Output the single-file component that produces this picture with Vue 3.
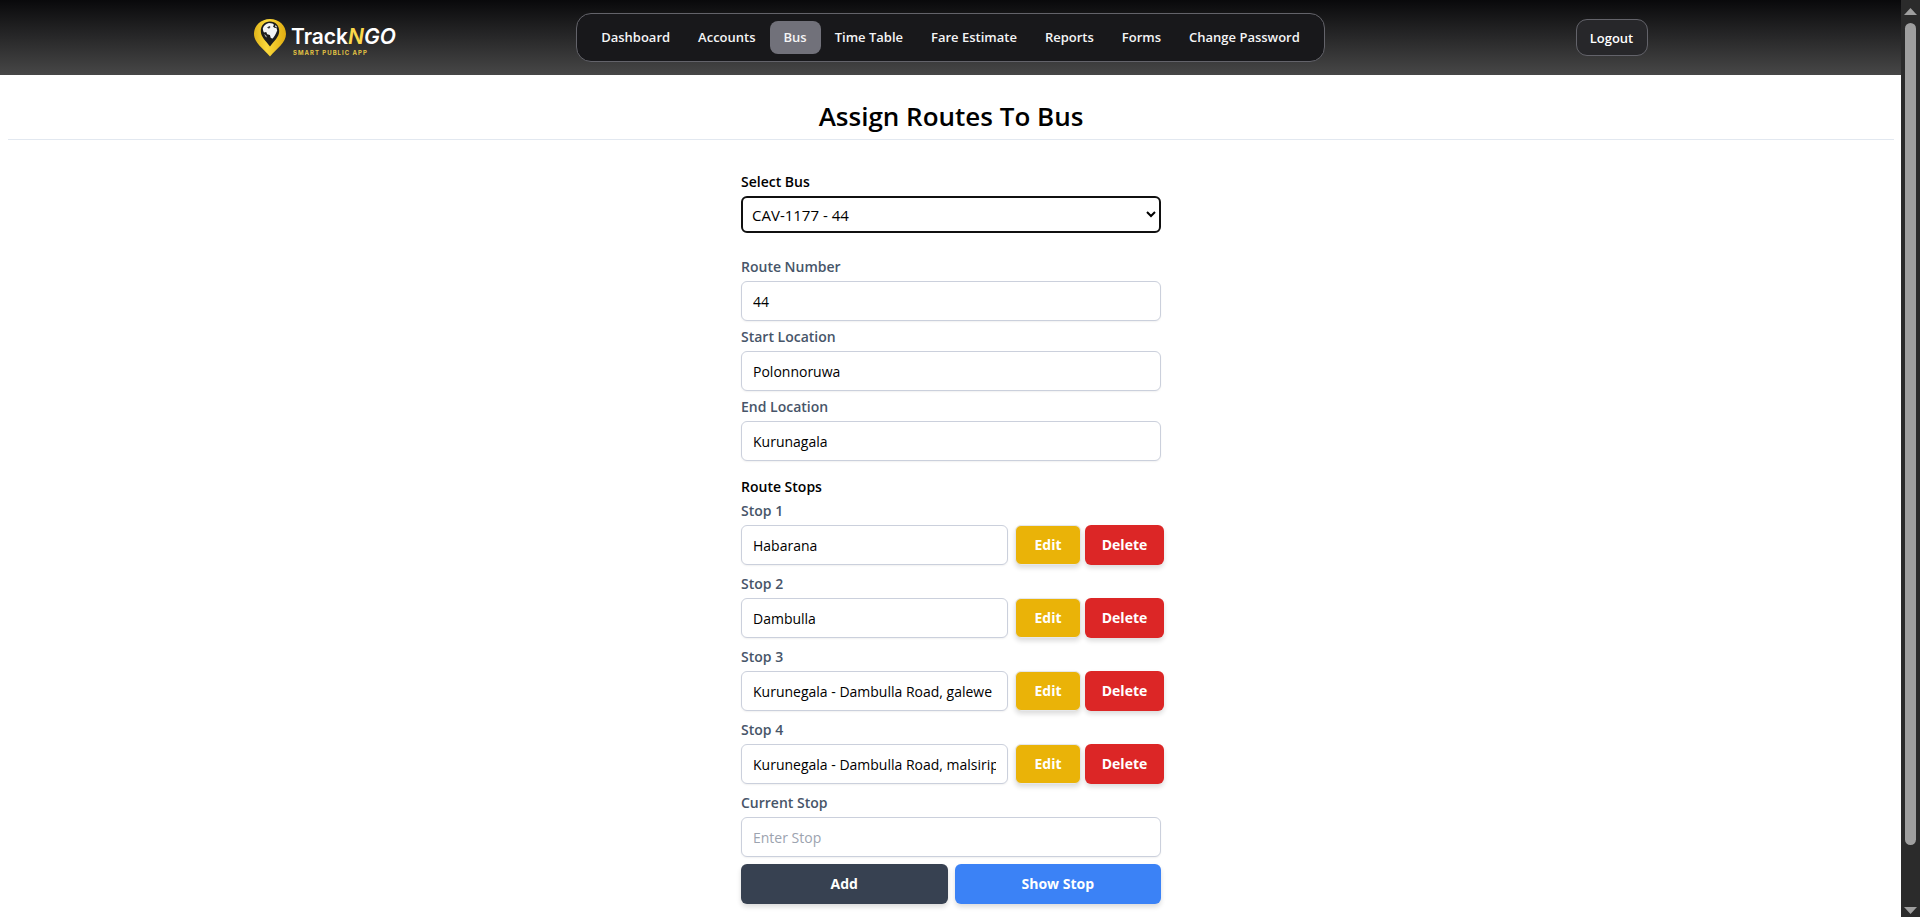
<script setup>
import { ref } from 'vue'

const navItems = ['Dashboard', 'Accounts', 'Bus', 'Time Table', 'Fare Estimate', 'Reports', 'Forms', 'Change Password']
const active = ref('Bus')
const bus = ref('CAV-1177 - 44')
const fields = ref([
  { id: 'route-number', label: 'Route Number', value: '44' },
  { id: 'start-location', label: 'Start Location', value: 'Polonnoruwa' },
  { id: 'end-location', label: 'End Location', value: 'Kurunagala' },
])
const stops = ref(['Habarana', 'Dambulla', 'Kurunegala - Dambulla Road, galewe', 'Kurunegala - Dambulla Road, malsirip'])
const currentStop = ref('')
</script>

<template>
  <div class="window">
    <div class="page">
      <header class="header">
        <div class="bar">
          <a href="#" class="logo" aria-label="TrackNGO">
            <svg width="144" height="42" viewBox="0 0 144 42">
              <defs>
                <linearGradient id="pin" x1="0" y1="0" x2="1" y2="0">
                  <stop offset="0" stop-color="#e0b41a" />
                  <stop offset="0.4" stop-color="#fbd93c" />
                  <stop offset="1" stop-color="#e0ac10" />
                </linearGradient>
              </defs>
              <path d="M16 2C7 2 0 8.600 0 17c0 8.500 9 14.500 16 22.500C23 31.500 32 25.500 32 17 32 8.600 25 2 16 2z" fill="url(#pin)" />
              <path d="M16 4.500C10.500 4.500 6.800 8.500 6.800 14c0 6 5.200 10 9.200 15.500 4-5.500 9.200-9.500 9.200-15.500C25.200 8.500 21.500 4.500 16 4.500z" fill="#1c1c1d" />
              <path d="M8.800 11.500c.8-2.800 3-5 6.200-5.500l3.500.4 1.500 1.400-1 1.600 1.500 1.300 2 .3.700 2.500-1.300 3-1.200 2.300-2 2.700-1.900-.4-.9-3.100-2.700-.8-1-2.200-2.200.6-.8-1.700z" fill="#f4f4f4" />
              <path d="M13 10.500l2.500-1.500 1 1-1.500 1.700z" fill="#3a3a3b" />
              <path d="M21.500 8l1.700 2-.8.600-1.500-1.200z" fill="#dddddd" />
              <path d="M10 17l2 1.200 1.200 2.300-1.700-.8z" fill="#a8a8a8" />
              <text x="37" y="27" class="brand">Track<tspan class="italic yellow">N</tspan><tspan class="italic">GO</tspan></text>
              <text x="39" y="38" class="tagline">SMART PUBLIC APP</text>
            </svg>
          </a>
          <nav class="nav">
            <a v-for="item in navItems" :key="item" href="#" class="nav-item" :class="{ active: item === active }" @click.prevent="active = item">{{ item }}</a>
          </nav>
          <button type="button" class="logout">Logout</button>
        </div>
      </header>

      <main class="content">
        <h1 class="title">Assign Routes To Bus</h1>
        <form class="form" @submit.prevent>
          <label class="label strong" for="bus">Select Bus</label>
          <select id="bus" v-model="bus" class="select">
            <option>CAV-1177 - 44</option>
          </select>

          <div class="group">
            <template v-for="field in fields" :key="field.id">
              <label class="label" :for="field.id">{{ field.label }}</label>
              <input :id="field.id" v-model="field.value" class="input" type="text" />
            </template>
          </div>

          <h2 class="stops-title">Route Stops</h2>
          <div v-for="(stop, i) in stops" :key="i" class="stop">
            <label class="label compact" :for="'stop-' + i">Stop {{ i + 1 }}</label>
            <div class="stop-row">
              <input :id="'stop-' + i" v-model="stops[i]" class="input" type="text" />
              <button type="button" class="btn edit">Edit</button>
              <button type="button" class="btn delete">Delete</button>
            </div>
          </div>

          <label class="label compact" for="current">Current Stop</label>
          <input id="current" v-model="currentStop" class="input" type="text" placeholder="Enter Stop" />
          <div class="actions">
            <button type="button" class="btn add">Add</button>
            <button type="button" class="btn show">Show Stop</button>
          </div>
        </form>
      </main>
    </div>

    <div class="scrollbar" aria-hidden="true">
      <svg width="13" height="7" viewBox="0 0 13 7"><path d="M6.500 0L13 7H0z" fill="#9f9f9f" /></svg>
      <div class="track"><div class="thumb"></div></div>
      <svg width="13" height="7" viewBox="0 0 13 7"><path d="M6.500 7L13 0H0z" fill="#9f9f9f" /></svg>
    </div>
  </div>
</template>

<style>
body {
  margin: 0;
  background: #fff;
}
</style>

<style scoped>
.window {
  display: flex;
  height: 100vh;
  overflow: hidden;
  font-family: "Segoe UI", "Open Sans", "Noto Sans", sans-serif;
  font-size: 14px;
  line-height: 24px;
  color: #000;
}
.window *,
.window {
  box-sizing: border-box;
}
.page {
  flex: 1;
  min-width: 0;
  overflow: hidden;
}
.header {
  background: linear-gradient(#09090b, #474747);
}
.bar {
  display: grid;
  grid-template-columns: 1fr auto 1fr;
  align-items: center;
  max-width: 1394px;
  height: 75px;
  margin: 0 auto;
}
.logo {
  display: flex;
}
.brand {
  font-family: Inter, sans-serif;
  font-size: 21px;
  font-weight: 600;
  fill: #fff;
}
.italic {
  font-style: italic;
}
.yellow {
  fill: #fbd84b;
}
.tagline {
  font-family: Inter, sans-serif;
  font-size: 6px;
  font-weight: 700;
  letter-spacing: 1px;
  fill: #e3c344;
}
.nav {
  display: flex;
  align-items: center;
  height: 49px;
  padding: 0 10px;
  border: 1px solid #63636a;
  border-radius: 15px;
  background: #18181b;
}
.nav-item {
  padding: 0 13px;
  border: 1px solid transparent;
  border-radius: 8px;
  font-size: 13px;
  font-weight: 600;
  line-height: 31px;
  color: #f4f4f5;
  text-decoration: none;
  white-space: nowrap;
}
.nav-item.active {
  background: #71717a;
}
.logout {
  justify-self: end;
  width: 72px;
  height: 37px;
  padding: 0;
  border: 1px solid #63636a;
  border-radius: 11px;
  background: #27272a;
  color: #fff;
  font: inherit;
  font-size: 13px;
  font-weight: 600;
}
.content {
  padding: 0 7px 0 8px;
}
.title {
  margin: 0;
  padding: 22px 0 3px;
  border-bottom: 1px solid #e2e8f0;
  font-size: 26px;
  font-weight: 600;
  line-height: 39px;
  text-align: center;
}
.form {
  width: 420px;
  max-width: 100%;
  margin: 0 auto;
  padding-top: 30px;
}
.label {
  display: block;
  padding: 4px 0 2px;
  line-height: 24px;
  font-weight: 600;
  color: #475569;
}
.label.strong {
  padding: 0 0 2px;
  color: #000;
}
.label.compact {
  padding: 0 0 2px;
}
.select {
  display: block;
  width: 100%;
  height: 37px;
  padding: 0 5px;
  border: 2px solid #101010;
  border-radius: 6px;
  outline: 0;
  background: #fff;
  color: #000;
  font: inherit;
  font-size: 15px;
}
.group {
  padding-top: 18px;
}
.input {
  display: block;
  width: 100%;
  height: 40px;
  padding: 0 11px;
  border: 1px solid #cbd0dc;
  border-radius: 6px;
  outline: 0;
  background: #fff;
  box-shadow: 0 1px 2px rgba(0, 0, 0, 0.06);
  color: #000;
  font: inherit;
}
.input::placeholder {
  color: #9ca3af;
  opacity: 1;
}
.stops-title {
  margin: 14px 0 0;
  font-size: 14px;
  font-weight: 600;
  line-height: 24px;
}
.stop {
  padding-bottom: 7px;
}
.stop-row {
  display: flex;
  align-items: center;
}
.stop-row .input {
  flex: none;
  width: 267px;
  margin-right: 7px;
}
.btn {
  flex: none;
  height: 40px;
  padding: 0;
  border: 0;
  border-radius: 6px;
  color: #fff;
  font: inherit;
  font-weight: 700;
  box-shadow: 0 3px 5px rgba(0, 0, 0, 0.14);
}
.edit {
  width: 66px;
  margin-right: 4px;
  border: 1px solid #e5e7eb;
  background: #eab308;
}
.delete {
  width: 79px;
  background: #dc2626;
}
.actions {
  display: flex;
  gap: 7px;
  padding-top: 7px;
}
.actions .btn {
  flex: 1;
}
.add {
  background: #374151;
}
.show {
  background: #3b82f6;
}
.scrollbar {
  display: flex;
  flex: none;
  flex-direction: column;
  align-items: center;
  width: 19px;
  padding: 8px 0 3px;
  background: #2b2b2b;
}
.track {
  flex: 1;
  padding-top: 8px;
}
.thumb {
  width: 11px;
  height: 93%;
  border-radius: 6px;
  background: #9f9f9f;
}
</style>
